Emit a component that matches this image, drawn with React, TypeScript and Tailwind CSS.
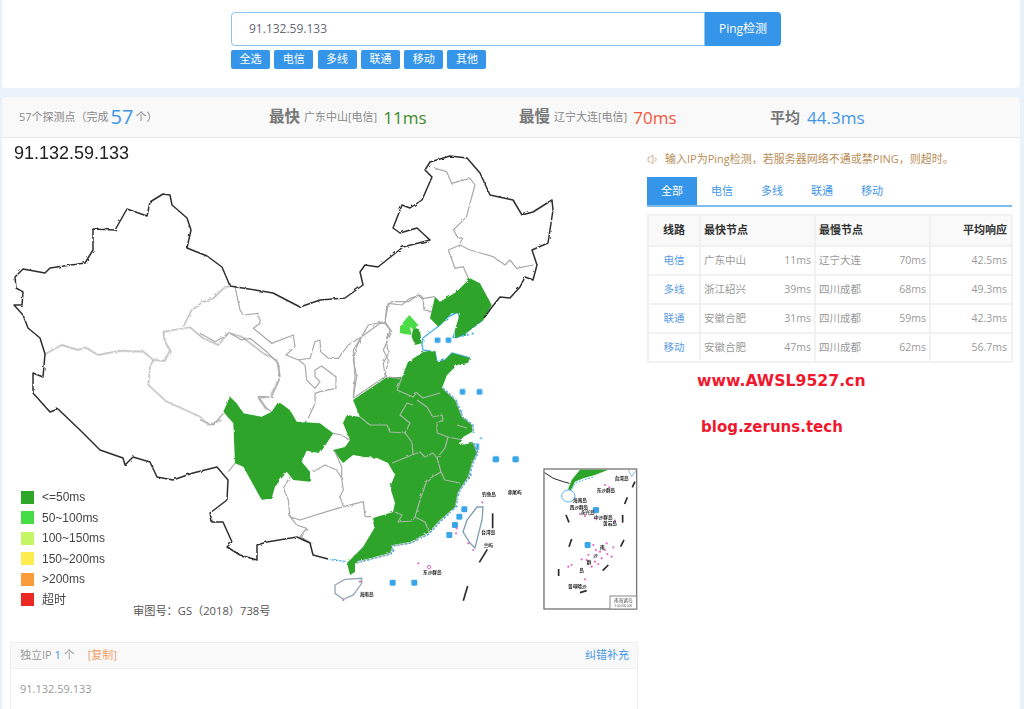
import { Volume1 } from "lucide-react";

const SANS = "font-['Open_Sans','Noto_Sans_CJK_SC',sans-serif]";

const tags = ["全选", "电信", "多线", "联通", "移动", "其他"];
const tabs = ["电信", "多线", "联通", "移动"];

const rows = [
  { line: "电信", fast: "广东中山", fastMs: "11ms", slow: "辽宁大连", slowMs: "70ms", avg: "42.5ms" },
  { line: "多线", fast: "浙江绍兴", fastMs: "39ms", slow: "四川成都", slowMs: "68ms", avg: "49.3ms" },
  { line: "联通", fast: "安徽合肥", fastMs: "31ms", slow: "四川成都", slowMs: "59ms", avg: "42.3ms" },
  { line: "移动", fast: "安徽合肥", fastMs: "47ms", slow: "四川成都", slowMs: "62ms", avg: "56.7ms" },
];

const legend = [
  { label: "<=50ms", color: "bg-[#2ca728]" },
  { label: "50~100ms", color: "bg-[#46dc46]" },
  { label: "100~150ms", color: "bg-[#c4f664]" },
  { label: "150~200ms", color: "bg-[#fdec4f]" },
  { label: ">200ms", color: "bg-[#fb9c3a]" },
  { label: "超时", color: "bg-[#ea2a22]" },
];

// everything below is traced off the reference, page coordinates
const BORDER_WEST =
  "M230 286 222 267 207 256 187 248 191 230 187 218 172 205 170 195 163 194 150 202 147 216 127 209 115 230 93 229 93 250 85 263 50 268 45 273 23 269 15 277 16 288 23 292 22 305 14 305 23 315 28 328 40 338 45 354 43 377 33 373 33 393 50 412 58 409 80 430 100 450 123 458 125 465 133 457 150 462 157 477 173 480 193 473 217 467 228 480 227 500 210 513 212 522 223 522 232 542 227 547 240 555 257 560 257 545 267 542 297 537 310 543 313 555 328 559";
const BORDER_NORTH =
  "M230 286 273 293 300 307 320 300 345 298 363 285 360 272 365 265 378 267 403 247 430 240 417 228 400 233 393 228 402 205 410 208 422 200 432 177 425 170 430 162 450 156 467 158 480 173 490 195 513 200 522 215 533 212 552 200 553 210 548 243 532 250 537 265 533 280 525 277 520 287 510 298 500 297 492 307 484 318";

const EAST_GREEN =
  "M333 450 345 447 350 440 343 423 347 415 360 417 353 400 387 377 402 377 408 362 423 352 435 350 437 362 445 360 452 353 470 358 468 363 457 365 447 375 442 388 455 400 462 417 472 425 472 432 463 437 460 445 473 443 477 453 472 463 468 477 458 492 455 507 440 520 428 533 410 542 393 545 390 553 363 560 355 562 355 572 350 575 347 563 363 547 375 527 373 518 393 512 395 503 390 487 395 475 388 463 377 458 365 457 353 455 343 463Z";
const COAST =
  "M443 388 456 400 463 417 473 425 474 433 M474 443 478 453 473 463 469 477 459 492 456 507 441 521 429 534 411 543 394 546 391 554 364 561 356 563";
const BOHAI =
  "M483 320 463 335 455 338 453 337 460 320 458 312 448 317 440 325 423 338 422 345 423 350 435 352 437 362 445 360 452 353 470 358";
const EAST_LINES = [
  "M360 417 370 425 387 425 390 432 405 433 412 442 413 455",
  "M405 433 410 423 400 415 407 403 413 405",
  "M392 463 412 455 420 452 425 457 433 453 437 458",
  "M437 458 445 448 448 437",
  "M437 458 441 472 445 480 460 483",
  "M441 472 427 480 420 500 415 517 425 522 429 532",
  "M395 512 402 515 398 522 412 521 415 517",
  "M402 377 397 390 413 397 417 393 423 398 440 393",
  "M417 400 427 407 433 417 442 415 443 420 437 423 437 433 448 437 463 440",
  "M457 425 467 428",
];

// zoom of the centre: x/3+200, y/3+280
const SICHUAN =
  "M90 350 70 395 100 430 105 550 130 560 185 660 215 655 225 620 260 575 280 600 330 605 330 575 305 545 320 512 360 520 400 460 360 430 290 425 270 390 235 365 215 395 185 410 130 400 110 370Z";
const GRAY_LINES = [
  "M105 20 120 90 130 105 175 100 180 130 160 145 215 190 280 165 285 200 258 225 295 240",
  "M290 240 330 235 345 185 360 180 362 215 385 235 415 235 445 195 485 170 470 200 460 240 470 290 460 350",
  "M295 240 315 255 320 300 345 325 360 305 345 290 345 270 365 258 408 290 408 325 360 335 345 340 345 370 325 415",
  "M485 170 540 130 555 130 560 80 575 65 625 65 655 45 670 60 672 90 695 95",
  "M555 130 570 150 560 190 565 220 550 250 555 285",
  "M0 160 45 185 90 160 125 180 150 175 200 215 235 250 240 295 215 350 175 350 200 385 215 395",
  "M0 420 40 435 70 400",
  "M250 625 265 660 270 710 300 720 380 695 430 680 490 665 495 710 520 710",
  "M250 625 270 590",
  "M340 575 375 555 410 570 425 595 430 630 420 650 430 680",
  "M425 595 425 560 405 515",
  "M400 460 425 465 450 480",
  "M270 710 290 735 320 745 300 770 335 790",
  "M105 550 85 575",
];
const WEST_LINES = [
  "M690 408 670 415 640 445 610 455 575 480 550 530",
  "M135 612 185 585 235 600 255 592 295 615 360 602 430 605 460 630 495 632 510 600 495 575 490 545 570 532 610 565 655 585 685 548 725 560 790 610 830 630 840 680 810 740 775 745 800 780",
  "M460 630 450 650 445 705 500 755 600 800 625 825 665 810",
];
const NE_LINES = [
  "M345 55 380 65 395 100 450 85 465 105 450 160 440 200 400 240 415 265 430 262 420 280",
  "M385 300 420 285 450 300 520 320 555 345 570 330 590 355 640 345",
  "M385 300 405 355 430 350 445 385",
  "M345 440 310 445 300 435 270 445 245 465 205 460 195 515 145 525 125 560 100 600 105 680 100 745",
  "M195 515 215 545 190 600 205 630 195 680 240 685",
  "M100 745 195 680",
];

const DASHES = [
  [518, 190, 518, 235],
  [502, 298, 478, 337],
  [443, 408, 430, 452],
  [945, 95, 937, 112],
  [922, 142, 914, 162],
  [908, 195, 908, 218],
  [738, 195, 747, 217],
  [755, 267, 747, 290],
  [912, 270, 902, 290],
  [865, 345, 848, 362],
  [716, 357, 716, 378],
  [780, 428, 800, 422],
];
const BLUE_BLOBS = [
  [527, 28],
  [587, 28],
  [218, 398],
  [283, 398],
  [433, 178],
  [418, 200],
  [405, 225],
  [388, 255],
  [828, 180],
  [803, 285],
];
const PINK_DOTS = [
  [295, 340], [487, 157], [410, 235], [408, 250], [445, 280], [460, 300], [70, 450], [120, 395],
  [820, 285], [860, 280], [880, 292], [840, 305], [862, 312], [875, 320], [805, 315], [785, 328],
  [800, 330], [825, 335], [835, 342], [815, 350], [745, 350], [755, 345], [795, 388], [845, 325],
  [855, 300], [828, 300], [780, 192], [795, 198], [825, 205], [885, 212], [855, 105], [868, 112],
];
const MAP_LABELS: [number, number, string][] = [
  [507, 139, "钓鱼岛"], [584, 133, "赤尾屿"], [505, 253, "台湾岛"], [505, 291, "兰屿"],
  [337, 373, "东沙群岛"], [140, 437, "海南岛"],
  [905, 89, "台湾岛"], [858, 126, "东沙群岛"], [780, 157, "海南岛"], [777, 176, "西沙群岛"],
  [803, 192, "永兴岛"], [850, 208, "中沙群岛"], [870, 226, "黄岩岛"], [847, 298, "南"],
  [827, 321, "沙"], [807, 343, "群"], [785, 365, "岛"], [772, 415, "曾母暗沙"],
];

function ChinaMap() {
  return (
    <svg viewBox="2 138 636 494" className="block h-[494px] w-[636px]">
      <defs>
        <filter id="rough" x="-5%" y="-5%" width="110%" height="110%">
          <feTurbulence type="fractalNoise" baseFrequency="0.22" numOctaves="2" seed="4" />
          <feDisplacementMap in="SourceGraphic" scale="2.6" />
        </filter>
      </defs>

      <g filter="url(#rough)" fill="none" strokeLinejoin="round">
        <path d={COAST} stroke="#4ab0f0" strokeWidth="1.5" strokeDasharray="2.5 1.5" />
        <path d={BOHAI} stroke="#4ab0f0" strokeWidth="1.4" />
        <path d={EAST_GREEN} fill="#2da52b" />
        <path d={COAST} stroke="#9aa89a" strokeWidth="0.8" transform="translate(-1 0)" />
        <g stroke="#a8b8a5" strokeWidth="1.2">
          {EAST_LINES.map((d) => (
            <path key={d} d={d} />
          ))}
        </g>

        <g transform="translate(200 280) scale(0.3333)">
          <path d={SICHUAN} fill="#2da52b" />
          <g stroke="#a9a9a9" strokeWidth="3.6">
            {GRAY_LINES.map((d) => (
              <path key={d} d={d} />
            ))}
          </g>
          <path d="M385 838 440 845" stroke="#4ab0f0" strokeWidth="4" strokeDasharray="7 4" />
        </g>

        <g transform="translate(0 150) scale(0.3333)" stroke="#a9a9a9" strokeWidth="3.6">
          {WEST_LINES.map((d) => (
            <path key={d} d={d} />
          ))}
        </g>

        <g transform="translate(320 150) scale(0.3333)">
          <g stroke="#a9a9a9" strokeWidth="3.6">
            {NE_LINES.map((d) => (
              <path key={d} d={d} />
            ))}
          </g>
          <path
            d="M450 385 480 400 515 465 490 510 430 555 405 565 405 540 420 490 395 490 355 530 330 505 345 440 360 455 410 425Z"
            fill="#2da52b"
          />
          <path d="M280 530 300 540 305 580 285 585 275 560Z" fill="#2da52b" />
          <path d="M268 495 295 525 280 540 270 530 275 555 240 550 240 530 255 510Z" fill="#4cdb46" />
        </g>

        <g stroke="#2f2f2f" strokeWidth="1.5">
          <path d={BORDER_WEST} />
          <path d={BORDER_NORTH} />
        </g>
      </g>

      {/* islands, nine dash line and the inset */}
      <g transform="translate(320 150) scale(0.3333)" fill="#3aa6ea">
        {[[352, 570], [385, 570], [427, 725], [478, 725], [528, 927], [586, 927]].map(([x, y]) => (
          <rect key={x} x={x - 8} y={y - 8} width="17" height="17" rx="4" />
        ))}
        <rect x="440" y="552" width="6" height="5" />
        <rect x="455" y="548" width="6" height="5" />
        <rect x="425" y="555" width="6" height="5" />
        <rect x="468" y="880" width="9" height="20" />
        <rect x="480" y="862" width="6" height="5" />
      </g>

      <g transform="translate(320 450) scale(0.3333)">
        <path
          d="M45 405 75 388 125 385 125 400 100 435 70 448 45 430Z"
          fill="#fff"
          stroke="#93a7b5"
          strokeWidth="4"
        />
        <path
          d="M471 171 489 171 486 210 465 294 450 279 429 246 441 210Z"
          fill="#fff"
          stroke="#7f9fb5"
          strokeWidth="4"
        />
        <circle cx="327" cy="351" r="5" fill="none" stroke="#e56ac0" strokeWidth="3" />

        <rect x="672" y="57" width="278" height="420" fill="#fff" stroke="#777" strokeWidth="4" />
        <path d="M780 59 865 59 825 75 790 85 765 95 752 122 744 118 755 90Z" fill="#2da52b" />
        <path d="M674 68 700 85 730 95 748 100" fill="none" stroke="#222" strokeWidth="3" />
        <path d="M752 125 765 100 790 90 825 80" fill="none" stroke="#4ab0f0" strokeWidth="3" strokeDasharray="6 4" />
        <ellipse cx="745" cy="138" rx="20" ry="18" fill="#fff" stroke="#5ab2e8" strokeWidth="3" />
        <path d="M925 59 935 80 948 62" fill="none" stroke="#7fbde8" strokeWidth="3" />
        <rect x="870" y="438" width="80" height="39" fill="#fff" stroke="#888" strokeWidth="3" />
        <text x="910" y="457" textAnchor="middle" fontSize="14" fill="#444" fontFamily="Noto Sans CJK SC">
          南海诸岛
        </text>
        <text x="910" y="472" textAnchor="middle" fontSize="9" fill="#555" fontFamily="Liberation Sans">
          1:40 000 000
        </text>

        {BLUE_BLOBS.map(([x, y]) => (
          <rect key={`${x}-${y}`} x={x - 9} y={y - 9} width="18" height="18" rx="4" fill="#3aa6ea" />
        ))}
        {PINK_DOTS.map(([x, y]) => (
          <circle key={`${x}-${y}`} cx={x} cy={y} r="3.2" fill="#e962c4" />
        ))}
        {DASHES.map(([x1, y1, x2, y2]) => (
          <line key={`${x1}-${y1}`} x1={x1} y1={y1} x2={x2} y2={y2} stroke="#2b2b2b" strokeWidth="5" />
        ))}
        {MAP_LABELS.map(([x, y, t]) => (
          <text
            key={`${x}-${y}`}
            x={x}
            y={y}
            textAnchor="middle"
            fontSize="14"
            fontWeight="700"
            fill="#222"
            fontFamily="Noto Sans CJK SC"
          >
            {t}
          </text>
        ))}
      </g>
    </svg>
  );
}

export default function App() {
  return (
    <div className={`h-[709px] w-[1024px] overflow-hidden bg-[#e9f2fb] pl-[2px] pr-[4px] ${SANS}`}>
      {/* search */}
      <div className="h-[88px] rounded-b bg-white pl-[229px] pt-[12px]">
        <div className="flex h-[34px] w-[550px]">
          <div className="flex w-[474px] items-center rounded-l border border-[#8cc4f2] pl-[17px] text-xs text-[#667]">
            91.132.59.133
          </div>
          <button className="w-[76px] rounded-r bg-[#3595e8] text-xs text-white">Ping检测</button>
        </div>
        <div className="mt-[4px] flex gap-[4.3px]">
          {tags.map((t) => (
            <span
              key={t}
              className="flex h-[19px] w-[39px] items-center justify-center rounded-[2px] bg-[#3595e8] text-[11px] text-white"
            >
              {t}
            </span>
          ))}
        </div>
      </div>

      {/* result card */}
      <div className="mt-[9px] h-[612px] rounded-t bg-white">
        <div className="flex h-[41px] items-center rounded-t border-b border-[#e8e8e8] bg-[#f9f9f9] text-[#888]">
          <div className="flex w-[267px] items-center pl-[17px] text-[11px]">
            57个探测点（完成
            <span className="mx-[2px] text-[20px] leading-none text-[#3f96e8]">57</span>个）
          </div>
          <div className="flex w-[250px] items-center">
            <b className="text-[15.5px] text-[#777]">最快</b>
            <span className="ml-[4px] text-[11px]">广东中山[电信]</span>
            <span className="ml-[6px] text-[17px] leading-none text-[#3d8b2a]">11ms</span>
          </div>
          <div className="flex w-[251px] items-center">
            <b className="text-[15.5px] text-[#777]">最慢</b>
            <span className="ml-[4px] text-[11px]">辽宁大连[电信]</span>
            <span className="ml-[6px] text-[17px] leading-none text-[#f4553a]">70ms</span>
          </div>
          <div className="flex items-center">
            <b className="text-[15px] text-[#777]">平均</b>
            <span className="ml-[7px] text-[17px] leading-none text-[#3f96e8]">44.3ms</span>
          </div>
        </div>

        <div className="flex">
          {/* map column */}
          <div className="w-[645px] shrink-0">
            <div className="relative h-[504px]">
              <h2 className="absolute left-[12px] top-[5px] font-['Liberation_Sans',sans-serif] text-[18px] leading-[20px] text-[#222]">
                91.132.59.133
              </h2>
              <ChinaMap />
              <ul className="absolute left-[19px] top-[352px] flex flex-col gap-[6.6px] font-['Liberation_Sans','Noto_Sans_CJK_SC',sans-serif] text-xs text-[#444]">
                {legend.map((l) => (
                  <li key={l.label} className="flex h-[14px] items-center gap-[8px]">
                    <span className={`h-[13px] w-[13px] ${l.color}`} />
                    {l.label}
                  </li>
                ))}
              </ul>
              <p className="absolute left-[131px] top-[465px] text-[11.2px] leading-4 text-[#555]">
                审图号：GS（2018）738号
              </p>
            </div>
            <div className="ml-[8px] w-[628px] border border-[#eee]">
              <div className="flex h-[26px] items-center justify-between border-b border-[#eee] bg-[#f9f9f9] pl-[9px] pr-[8px] text-[11px] text-[#999]">
                <span>
                  独立IP <span className="text-[#3f96e8]">1</span> 个
                  <span className="ml-[13px] text-[#f09a63]">[复制]</span>
                </span>
                <span className="text-[#3f96e8]">纠错补充</span>
              </div>
              <div className="h-[60px] pl-[9px] pt-[12px] text-[11px] text-[#999]">91.132.59.133</div>
            </div>
          </div>

          {/* side column */}
          <div className="w-[365px] shrink-0">
            <div className="mt-[14px] flex h-[14px] items-center text-[11px] text-[#b98d55]">
              <Volume1 size={13} strokeWidth={1.5} className="text-[#c69c6d]" />
              <span className="ml-[5px]">输入IP为Ping检测，若服务器网络不通或禁PING，则超时。</span>
            </div>
            <div className="mt-[11px] flex h-[30px] border-b-2 border-[#7ebcf0] text-[11px] text-[#3f96e8]">
              <span className="flex w-[50px] items-center justify-center bg-[#3595e8] text-white">全部</span>
              {tabs.map((t) => (
                <span key={t} className="flex w-[50px] items-center justify-center">
                  {t}
                </span>
              ))}
            </div>
            <table className="mt-[7px] w-[364px] table-fixed border-collapse">
              <colgroup>
                <col className="w-[52px]" />
                <col className="w-[115px]" />
                <col className="w-[115px]" />
                <col className="w-[82px]" />
              </colgroup>
              <thead>
                <tr className="h-[31px] bg-[#f9f9f9] text-[11px] text-[#333]">
                  <th className="border-2 border-[#f1f1f1] text-center font-semibold">线路</th>
                  <th className="border-2 border-[#f1f1f1] pl-[3px] text-left font-semibold">最快节点</th>
                  <th className="border-2 border-[#f1f1f1] pl-[3px] text-left font-semibold">最慢节点</th>
                  <th className="border-2 border-[#f1f1f1] pr-[4px] text-right font-semibold">平均响应</th>
                </tr>
              </thead>
              <tbody className="text-[10.5px] text-[#999]">
                {rows.map((r) => (
                  <tr key={r.line} className="h-[29px]">
                    <td className="border-2 border-[#f1f1f1] text-center text-[#5a9ae6]">{r.line}</td>
                    <td className="border-2 border-[#f1f1f1] px-[3px]">
                      <div className="flex justify-between">
                        <span>{r.fast}</span>
                        <span>{r.fastMs}</span>
                      </div>
                    </td>
                    <td className="border-2 border-[#f1f1f1] px-[3px]">
                      <div className="flex justify-between">
                        <span>{r.slow}</span>
                        <span>{r.slowMs}</span>
                      </div>
                    </td>
                    <td className="border-2 border-[#f1f1f1] pr-[4px] text-right">{r.avg}</td>
                  </tr>
                ))}
              </tbody>
            </table>
            <p className="ml-[50px] mt-[7px] font-['DejaVu_Sans',sans-serif] text-[15.7px] font-bold leading-[22px] text-[#f0182d]">
              www.AWSL9527.cn
            </p>
            <p className="ml-[54px] mt-[24px] font-['DejaVu_Sans',sans-serif] text-[15px] font-bold leading-[22px] text-[#f0182d]">
              blog.zeruns.tech
            </p>
          </div>
        </div>
      </div>
    </div>
  );
}
